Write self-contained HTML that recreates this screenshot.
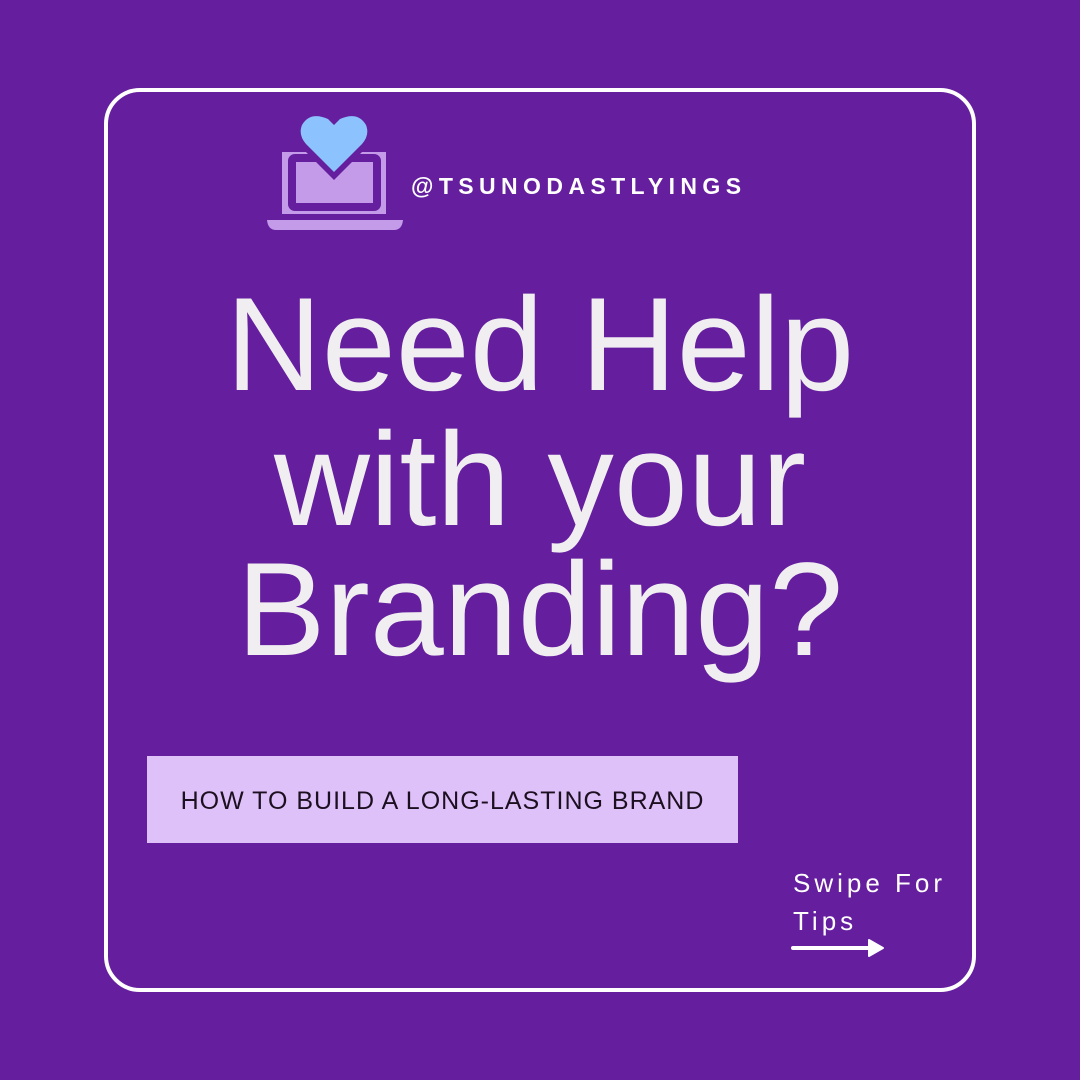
<!DOCTYPE html>
<html><head><style>
body{margin:0;width:1080px;height:1080px;background:#641e9e;position:relative;overflow:hidden;font-family:"Liberation Sans",sans-serif}
.frame{position:absolute;left:104px;top:88px;width:864px;height:896px;border:4.5px solid #fff;border-radius:36px}
.handle{position:absolute;left:411px;top:173px;color:#fff;font-weight:bold;font-size:23px;letter-spacing:5.4px}
.h{position:absolute;left:0;width:1080px;text-align:center;color:#f0eef0;font-size:133px;line-height:1;letter-spacing:0}
.tag{position:absolute;left:147px;top:756px;width:591px;height:87px;background:#dfc1fa;color:#1c1020;font-size:25px;letter-spacing:1px;line-height:91px;text-align:center}
.swipe{position:absolute;left:793px;top:864px;color:#fff;font-size:26px;letter-spacing:4px;line-height:38px}
</style></head><body>
<div class="frame"></div>
<svg style="position:absolute;left:0;top:0" width="1080" height="1080">
<rect x="282" y="152" width="104" height="62" fill="#c39be8"/>
<rect x="292" y="158" width="85" height="49" fill="none" stroke="#641e9e" stroke-width="8" rx="3"/>
<path d="M267 220 H403 Q402 230 394 230 H276 Q268 230 267 220Z" fill="#c39be8"/>
<path d="M334 180 L304 150 Q293 137 300 124 Q310 108 330 117 L334 121 L338 117 Q358 108 368 124 Q375 137 364 150 Z" fill="#641e9e"/>
<path d="M334 172 L306 144 Q298 135 302 125 Q310 111 328 119 L334 125 L340 119 Q358 111 366 125 Q370 135 362 144 Z" fill="#8cc3fe"/>
<path d="M793 948 H872" stroke="#fff" stroke-width="4" stroke-linecap="round"/>
<path d="M869 940 L883 948 L869 956 Z" fill="#fff" stroke="#fff" stroke-width="2" stroke-linejoin="round"/>
</svg>
<div class="handle">@TSUNODASTLYINGS</div>
<div class="h" style="top:279px">Need Help</div>
<div class="h" style="top:414px">with your</div>
<div class="h" style="top:544px">Branding?</div>
<div class="tag">HOW TO BUILD A LONG-LASTING BRAND</div>
<div class="swipe">Swipe For<br>Tips</div>
</body></html>
